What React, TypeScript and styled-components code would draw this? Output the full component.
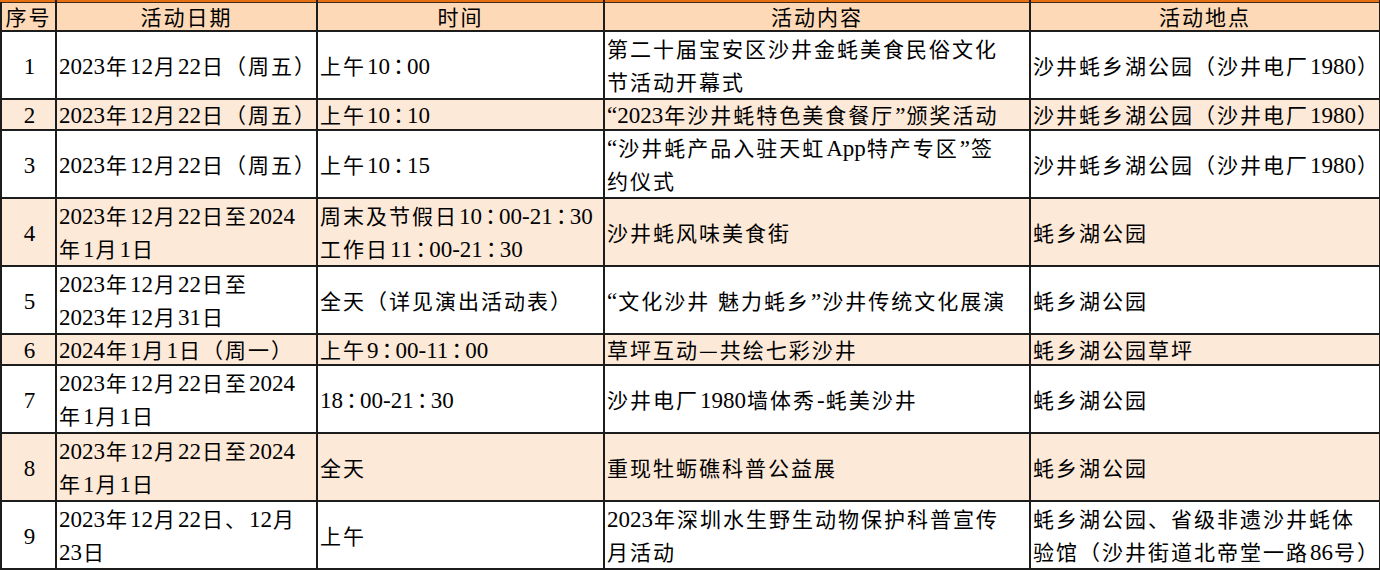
import * as React from 'react';
import styled, { createGlobalStyle } from 'styled-components';

const Global = createGlobalStyle`
  body {
    margin: 0;
    background: #ffffff;
  }
`;

const Sheet = styled.table`
  width: 1379px;
  table-layout: fixed;
  border-collapse: collapse;
  font-family: "Noto Sans CJK SC", "Liberation Serif", serif;
  font-size: 21px;
  letter-spacing: 2px;
  color: #000000;
`;

const HeadRow = styled.tr`
  background: #fdd9b7;
  line-height: 28px;
`;

const HeadCell = styled.th`
  font-weight: 400;
  text-align: center;
  padding: 0;
  border: 2px solid #1c1c1c;
  border-top: 2px solid #e8700f;
  white-space: nowrap;
  box-shadow: inset 0 1px 0 #3a2a20;
`;

const Row = styled.tr<{ $band?: boolean; $double?: boolean }>`
  background: ${(p) => (p.$band ? '#fde9d8' : '#ffffff')};
  line-height: ${(p) => (p.$double ? '33px' : '29px')};
`;

const Cell = styled.td<{ $center?: boolean }>`
  padding: 0 0 0 2px;
  border: 2px solid #1c1c1c;
  vertical-align: middle;
  text-align: ${(p) => (p.$center ? 'center' : 'left')};
  white-space: nowrap;
  overflow: hidden;
`;

// the trailing letter-spacing after the last glyph should not count
const Line = styled.div`
  margin-right: -2px;
`;

// like the spreadsheet, latin runs get a little air where they meet CJK text
const Latin = styled.span<{ $before?: boolean; $after?: boolean }>`
  font-family: "Liberation Serif", serif;
  font-size: 23px;
  letter-spacing: 0;
  line-height: 1;
  margin-left: ${(p) => (p.$before ? '1px' : '0')};
  margin-right: ${(p) => (p.$after ? '1px' : '0')};
`;

const Colon = styled.span`
  font-family: "Noto Sans CJK TC", sans-serif;
  letter-spacing: 0;
  margin: 0 -2px;
  line-height: 1;
`;

type Entry = {
  no: string;
  date: string[];
  time: string[];
  content: string[];
  place: string[];
};

const events: Entry[] = [
  { no: '1', date: ['2023年12月22日（周五）'], time: ['上午10：00'], content: ['第二十届宝安区沙井金蚝美食民俗文化', '节活动开幕式'], place: ['沙井蚝乡湖公园（沙井电厂1980）'] },
  { no: '2', date: ['2023年12月22日（周五）'], time: ['上午10：10'], content: ['“2023年沙井蚝特色美食餐厅”颁奖活动'], place: ['沙井蚝乡湖公园（沙井电厂1980）'] },
  { no: '3', date: ['2023年12月22日（周五）'], time: ['上午10：15'], content: ['“沙井蚝产品入驻天虹App特产专区”签', '约仪式'], place: ['沙井蚝乡湖公园（沙井电厂1980）'] },
  { no: '4', date: ['2023年12月22日至2024', '年1月1日'], time: ['周末及节假日10：00-21：30', '工作日11：00-21：30'], content: ['沙井蚝风味美食街'], place: ['蚝乡湖公园'] },
  { no: '5', date: ['2023年12月22日至', '2023年12月31日'], time: ['全天（详见演出活动表）'], content: ['“文化沙井 魅力蚝乡”沙井传统文化展演'], place: ['蚝乡湖公园'] },
  { no: '6', date: ['2024年1月1日（周一）'], time: ['上午9：00-11：00'], content: ['草坪互动—共绘七彩沙井'], place: ['蚝乡湖公园草坪'] },
  { no: '7', date: ['2023年12月22日至2024', '年1月1日'], time: ['18：00-21：30'], content: ['沙井电厂1980墙体秀-蚝美沙井'], place: ['蚝乡湖公园'] },
  { no: '8', date: ['2023年12月22日至2024', '年1月1日'], time: ['全天'], content: ['重现牡蛎礁科普公益展'], place: ['蚝乡湖公园'] },
  { no: '9', date: ['2023年12月22日、12月', '23日'], time: ['上午'], content: ['2023年深圳水生野生动物保护科普宣传', '月活动'], place: ['蚝乡湖公园、省级非遗沙井蚝体', '验馆（沙井街道北帝堂一路86号）'] },
];

const latinRun = /^[0-9A-Za-z \-“”]+$/;
const token = /([0-9A-Za-z \-“”]+|：)/;

const isCjk = (part?: string) => !!part && part !== '：' && !latinRun.test(part);

const mixed = (s: string) => {
  const parts = s.split(token).filter((p) => p !== '');
  return parts.map((part, i) => {
    if (part === '：') return <Colon key={i}>：</Colon>;
    if (latinRun.test(part)) {
      return (
        <Latin key={i} $before={isCjk(parts[i - 1])} $after={isCjk(parts[i + 1])}>
          {part}
        </Latin>
      );
    }
    return part;
  });
};

const lines = (list: string[]) =>
  list.map((l, i) => <Line key={i}>{mixed(l)}</Line>);

export default function App() {
  return (
    <>
      <Global />
      <Sheet>
        <colgroup>
          <col style={{ width: 55 }} />
          <col style={{ width: 261 }} />
          <col style={{ width: 287 }} />
          <col style={{ width: 426 }} />
          <col style={{ width: 350 }} />
        </colgroup>
        <thead>
          <HeadRow>
            <HeadCell>序号</HeadCell>
            <HeadCell>活动日期</HeadCell>
            <HeadCell>时间</HeadCell>
            <HeadCell>活动内容</HeadCell>
            <HeadCell>活动地点</HeadCell>
          </HeadRow>
        </thead>
        <tbody>
          {events.map((e, i) => {
            const double = [e.date, e.time, e.content, e.place].some((c) => c.length > 1);
            return (
              <Row key={e.no} $band={i % 2 === 1} $double={double}>
                <Cell $center><Latin>{e.no}</Latin></Cell>
                <Cell>{lines(e.date)}</Cell>
                <Cell>{lines(e.time)}</Cell>
                <Cell>{lines(e.content)}</Cell>
                <Cell>{lines(e.place)}</Cell>
              </Row>
            );
          })}
        </tbody>
      </Sheet>
    </>
  );
}
